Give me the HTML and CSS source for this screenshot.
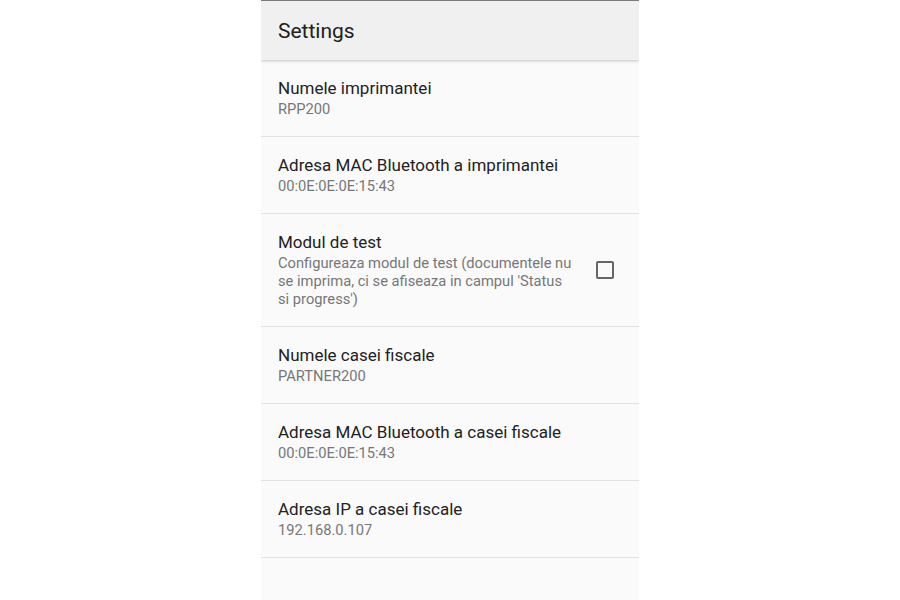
FILE: index.html
```html
<!DOCTYPE html>
<html lang="ro">
<head>
  <meta charset="UTF-8" />
  <meta name="viewport" content="width=device-width, initial-scale=1.0" />
  <title>Settings</title>
  <link rel="stylesheet" href="styles.css">
</head>
<body>
  <div class="phone">
    <header class="toolbar">
      <h1>Settings</h1>
    </header>

    <ul class="prefs">
      <li class="pref">
        <div class="pref-text">
          <div class="pref-title">Numele imprimantei</div>
          <div class="pref-summary">RPP200</div>
        </div>
      </li>
      <li class="pref">
        <div class="pref-text">
          <div class="pref-title">Adresa MAC Bluetooth a imprimantei</div>
          <div class="pref-summary">00:0E:0E:0E:15:43</div>
        </div>
      </li>
      <li class="pref">
        <div class="pref-text">
          <div class="pref-title">Modul de test</div>
          <div class="pref-summary">Configureaza modul de test (documentele nu se imprima, ci se afiseaza in campul 'Status si progress')</div>
        </div>
        <div class="pref-widget">
          <span class="checkbox"></span>
        </div>
      </li>
      <li class="pref">
        <div class="pref-text">
          <div class="pref-title">Numele casei fiscale</div>
          <div class="pref-summary">PARTNER200</div>
        </div>
      </li>
      <li class="pref">
        <div class="pref-text">
          <div class="pref-title">Adresa MAC Bluetooth a casei fiscale</div>
          <div class="pref-summary">00:0E:0E:0E:15:43</div>
        </div>
      </li>
      <li class="pref">
        <div class="pref-text">
          <div class="pref-title">Adresa IP a casei fiscale</div>
          <div class="pref-summary">192.168.0.107</div>
        </div>
      </li>
    </ul>
  </div>
</body>
</html>
```

FILE: styles.css
```css
body {
  margin: 0;
  padding: 0;
  background: #fff;
  font-family: Roboto, "Liberation Sans", sans-serif;
}
.phone {
  width: 378px;
  height: 600px;
  margin-left: 261px;
  background: #fafafa;
  overflow: hidden;
}
.toolbar {
  height: 59px;
  border-top: 1px solid #7a7a7a;
  background: #f0f0f0;
  box-shadow: 0 1px 3px rgba(0,0,0,0.22);
  display: flex;
  align-items: center;
  padding: 0 17px;
  position: relative;
}
.toolbar h1 {
  margin: 1px 0 0;
  font-size: 21px;
  font-weight: 400;
  color: #212121;
}
.prefs {
  list-style: none;
  margin: 0;
  padding: 0;
}
.pref {
  display: flex;
  align-items: center;
  padding: 17px 0 18px 17px;
  border-bottom: 1px solid #e2e2e2;
}
.pref-text {
  flex: 1;
}
.pref-title {
  font-size: 17px;
  line-height: 23px;
  color: #222;
}
.pref-summary {
  font-size: 14.7px;
  line-height: 18px;
  color: #777;
}
.pref-widget {
  width: 66px;
  flex: none;
  display: flex;
  justify-content: center;
  padding-right: 1px;
}
.checkbox {
  width: 14px;
  height: 14px;
  border: 2px solid #666;
  border-radius: 2px;
}
```
